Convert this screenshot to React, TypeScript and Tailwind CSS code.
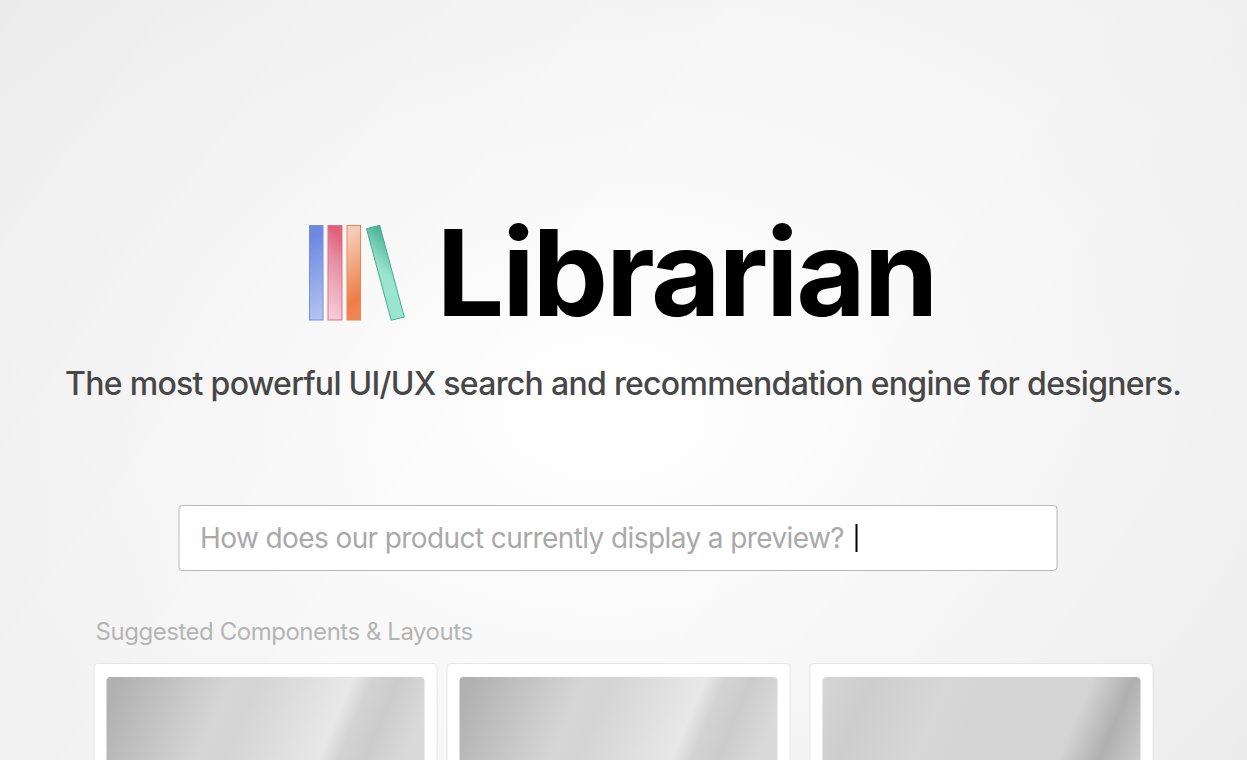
const SUGGESTIONS = [
  {
    id: 'preview-panel',
    spacing: '',
    sheen:
      'bg-[linear-gradient(113deg,#b1b1b1_12px,#d6d6d6_116px,#d4d4d4_141px,#e8e8e8_227px,#d3d3d3_245px,#cccccc_270px,#d9d9d9_306px)]',
  },
  {
    id: 'preview-modal',
    spacing: 'ml-[9px]',
    sheen:
      'bg-[linear-gradient(113deg,#b1b1b1_12px,#d6d6d6_116px,#d4d4d4_141px,#e8e8e8_227px,#d3d3d3_245px,#cccccc_270px,#d9d9d9_306px)]',
  },
  {
    id: 'preview-card',
    spacing: 'ml-[19px]',
    sheen:
      'bg-[linear-gradient(113deg,#d6d6d6_0px,#cdcdcd_46px,#d7d7d7_117px,#d4d4d4_160px,#d4d4d4_249px,#b0b0b0_287px,#cbcbcb_325px)]',
  },
];

function BooksLogo() {
  return (
    <svg width="98" height="98" viewBox="0 0 98 98" fill="none" aria-hidden="true">
      <defs>
        <linearGradient id="blue" x1="4" y1="14" x2="24" y2="90" gradientUnits="userSpaceOnUse">
          <stop offset="0" stopColor="#6f8ae0" />
          <stop offset="1" stopColor="#b3c2f1" />
        </linearGradient>
        <linearGradient id="pink" x1="37" y1="16" x2="-6" y2="70" gradientUnits="userSpaceOnUse">
          <stop offset="0" stopColor="#e0637e" />
          <stop offset="0.3" stopColor="#e68da1" />
          <stop offset="1" stopColor="#f6cdd8" />
        </linearGradient>
        <linearGradient id="orange" x1="30" y1="14" x2="72" y2="70" gradientUnits="userSpaceOnUse">
          <stop offset="0.05" stopColor="#f5ccb9" />
          <stop offset="0.4" stopColor="#f2aa84" />
          <stop offset="0.85" stopColor="#ef7d47" />
          <stop offset="1" stopColor="#f08452" />
        </linearGradient>
        <linearGradient id="green" x1="80" y1="14" x2="52" y2="42" gradientUnits="userSpaceOnUse">
          <stop offset="0" stopColor="#4db597" />
          <stop offset="0.7" stopColor="#9be5cf" />
        </linearGradient>
      </defs>
      <rect x="1.5" y="1.5" width="13.5" height="94.5" fill="url(#blue)" stroke="#748ee0" />
      <rect x="20" y="1.5" width="14" height="94.5" fill="url(#pink)" stroke="#dd718a" />
      <rect x="39" y="1.5" width="13.5" height="94.5" fill="url(#orange)" stroke="#ec8551" />
      <path d="M58.5 4.7 71.7 1.3 96.3 93.1 83.2 96.2Z" fill="url(#green)" stroke="#43ad8d" />
    </svg>
  );
}

export default function App() {
  return (
    <main className="h-[760px] w-full overflow-hidden bg-[linear-gradient(125deg,rgba(0,0,0,0.022),rgba(0,0,0,0)_45%,rgba(0,0,0,0)_60%,rgba(0,0,0,0.025)),radial-gradient(1100px_760px_at_605px_410px,#ffffff,#ededed)] font-['Inter',sans-serif]">
      <header className="pt-[213px]">
        <div className="flex h-[120px] items-start pl-[308px]">
          <div className="pt-[11px]">
            <BooksLogo />
          </div>
          <h1 className="ml-[30.5px] whitespace-nowrap text-[120px] font-bold leading-[120px] tracking-[-2.2px] text-black">
            Librarian
          </h1>
        </div>
        <p className="mt-[31px] whitespace-nowrap pl-[65px] text-[32px] font-medium leading-[40px] tracking-[-0.697px] text-[#474747]">
          The most powerful UI/UX search and recommendation engine for designers.
        </p>
      </header>

      {/* Search */}
      <div className="ml-[178px] mt-[101px] flex h-[66px] w-[879px] translate-x-[0.5px] items-center rounded border border-[#b8b8b8] bg-white pl-[20.5px]">
        <span className="whitespace-nowrap text-[28px] leading-9 font-normal tracking-[-0.595px] text-[#a9a9a9]">
          How does our product currently display a preview?
        </span>
        <span className="ml-[11px] h-7 w-[2px] bg-black" />
      </div>

      {/* Suggestions */}
      <section className="pl-[94px]">
        <h2 className="mt-[45px] whitespace-nowrap pl-[1.5px] text-[24px] font-normal leading-8 tracking-[-0.46px] text-[#b5b5b5]">
          Suggested Components &amp; Layouts
        </h2>
        <div className="mt-[15px] flex translate-x-[-0.5px]">
          {SUGGESTIONS.map((item) => (
            <article
              key={item.id}
              className={`h-[240px] w-[344px] shrink-0 rounded border border-[#e5e5e5] bg-white px-3 pt-[13px] ${item.spacing}`}
            >
              <div className={`h-[84px] rounded-t ${item.sheen}`} />
            </article>
          ))}
        </div>
      </section>
    </main>
  );
}
